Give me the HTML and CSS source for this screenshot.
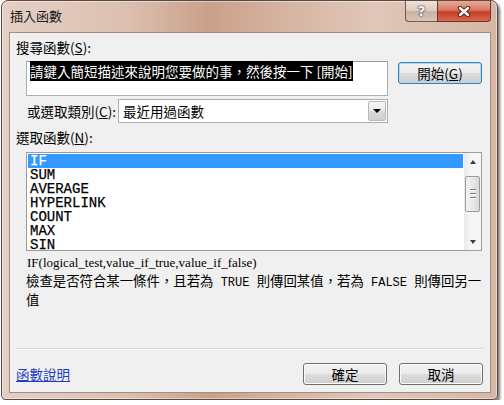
FILE: index.html
```html
<!DOCTYPE html>
<html lang="zh-Hant">
<head>
    <meta charset="UTF-8">
    <title>插入函數</title>
    <link rel="stylesheet" href="styles.css">
</head>
<body>
    <div class="window">
        <div class="titlebar">
            <span class="title">插入函數</span>
            <div class="caption-btns">
                <div class="cap-btn help">?</div>
                <div class="cap-btn close">
                    <svg width="14" height="11" viewBox="0 0 14 11">
                        <path d="M3 2 L11 9 M11 2 L3 9" stroke="#5b2418" stroke-width="4.4" stroke-linecap="round"/>
                        <path d="M3 2 L11 9 M11 2 L3 9" stroke="#fff" stroke-width="2.4" stroke-linecap="round"/>
                    </svg>
                </div>
            </div>
        </div>

        <div class="client">
            <div class="label">搜尋函數(<u>S</u>):</div>
            <div class="search-row">
                <div class="textbox"><span class="sel">請鍵入簡短描述來說明您要做的事，然後按一下 [開始]</span></div>
                <button class="btn btn-focus">開始(<u>G</u>)</button>
            </div>

            <div class="cat-row">
                <span class="cat-label">或選取類別(<u>C</u>):</span>
                <div class="combo">
                    <span class="combo-text">最近用過函數</span>
                    <span class="combo-btn"><span class="tri-down"></span></span>
                </div>
            </div>

            <div class="label label-list">選取函數(<u>N</u>):</div>
            <div class="listbox">
                <ul class="items">
                    <li class="selected">IF</li>
                    <li>SUM</li>
                    <li>AVERAGE</li>
                    <li>HYPERLINK</li>
                    <li>COUNT</li>
                    <li>MAX</li>
                    <li>SIN</li>
                </ul>
                <div class="scrollbar">
                    <div class="sb-arrow"><span class="tri-up"></span></div>
                    <div class="sb-thumb">
                        <span class="grip"></span>
                        <span class="grip"></span>
                        <span class="grip"></span>
                    </div>
                    <div class="sb-fill"></div>
                    <div class="sb-arrow"><span class="tri-down small"></span></div>
                </div>
            </div>

            <div class="syntax">IF(logical_test,value_if_true,value_if_false)</div>
            <div class="desc">檢查是否符合某一條件，且若為<span class="kw"> TRUE </span>則傳回某值，若為<span class="kw"> FALSE </span>則傳回另一值</div>

            <div class="separator"></div>
            <div class="footer">
                <a class="help-link" href="#">函數說明</a>
                <div class="footer-btns">
                    <button class="btn">確定</button>
                    <button class="btn">取消</button>
                </div>
            </div>
        </div>
    </div>
</body>
</html>
```

FILE: styles.css
```css
body {
    margin: 0;
    background-color: #ffffff;
    font-family: "Noto Sans CJK TC", sans-serif;
    font-size: 13.5px;
    color: #000;
}

.window {
    margin-left: 1px;
    width: 495px;
    height: 398px;
    border: 1px solid #5a4a41;
    border-radius: 7px 7px 5px 5px;
    background: linear-gradient(90deg, #e4cfc4 0%, #dcc0b0 25%, #c9a08a 42%, #d4b19e 55%, #e0c7b9 75%, #d6b6a4 100%);
    box-shadow: inset 0 0 0 1px rgba(255, 255, 255, 0.45), 2px 3px 3px rgba(0, 0, 0, 0.55);
    display: flex;
    flex-direction: column;
}

.titlebar {
    height: 31px;
    display: flex;
    justify-content: space-between;
    align-items: flex-start;
}

.title {
    padding: 7px 0 0 8px;
    font-size: 13px;
    line-height: 16px;
    color: #1a1a1a;
}

.caption-btns {
    display: flex;
    margin-right: 6px;
}

.cap-btn {
    height: 20px;
    display: flex;
    align-items: center;
    justify-content: center;
}

.help {
    width: 31px;
    border: 1px solid #6e5c52;
    border-top: none;
    border-right: none;
    border-radius: 0 0 0 4px;
    background: linear-gradient(#eee2da, #dccabf 48%, #c9b1a3 52%, #d9c4b8);
    font-family: "DejaVu Sans", sans-serif;
    font-weight: bold;
    font-size: 14px;
    color: #f4f4f4;
    text-shadow: 0 0 1px #444, 0 0 1px #444, 0 0 2px #555;
}

.close {
    width: 52px;
    border: 1px solid #6b3428;
    border-top: none;
    border-radius: 0 0 4px 0;
    background: linear-gradient(#eaa898, #d97a66 45%, #c63e24 55%, #d86a50);
}

.client {
    flex: 1;
    margin: 0 6px 6px 7px;
    background-color: #f0f0f0;
    border: 1px solid #a48c7e;
    padding: 6px 7px 7px 6px;
    display: flex;
    flex-direction: column;
}

.label {
    line-height: 16px;
}

.label-list {
    margin-top: 6px;
}

.search-row {
    display: flex;
    align-items: flex-start;
    margin: 6px 0 0 10px;
}

.textbox {
    box-sizing: border-box;
    width: 362px;
    height: 35px;
    padding: 1px 3px;
    background-color: #fff;
    border: 1px solid #abadb3;
    border-top-color: #9a9a9a;
    line-height: 16px;
    white-space: nowrap;
}

.sel {
    background-color: #000;
    color: #fff;
}

.btn {
    box-sizing: border-box;
    width: 84px;
    height: 22px;
    padding: 0;
    font: inherit;
    line-height: 18px;
    color: #000;
    border: 1px solid #707070;
    border-radius: 3px;
    background: linear-gradient(#f2f2f2, #ebebeb 50%, #dddddd 50%, #cfcfcf);
    box-shadow: inset 0 0 0 1px #fbfbfb;
}

.btn-focus {
    margin: 1px 0 0 10px;
    border-color: #3c7fb1;
    box-shadow: inset 0 0 0 1px #a7daf6;
}

.cat-row {
    display: flex;
    align-items: center;
    justify-content: space-between;
    width: 362px;
    margin: 3px 0 0 10px;
}

.cat-label {
    padding-left: 1px;
}

.combo {
    box-sizing: border-box;
    width: 270px;
    height: 24px;
    display: flex;
    align-items: center;
    justify-content: space-between;
    background-color: #fff;
    border: 1px solid #abadb3;
}

.combo-text {
    padding-left: 4px;
}

.combo-btn {
    box-sizing: border-box;
    width: 18px;
    height: 20px;
    margin-right: 1px;
    border: 1px solid #b8b8b8;
    border-radius: 2px;
    background: linear-gradient(#f6f6f6, #e8e8e8 50%, #d9d9d9 50%, #cfcfcf);
    display: flex;
    align-items: center;
    justify-content: center;
}

.tri-down {
    width: 0;
    height: 0;
    border-left: 4px solid transparent;
    border-right: 4px solid transparent;
    border-top: 4px solid #000;
}

.tri-down.small,
.tri-up {
    border-left-width: 3.5px;
    border-right-width: 3.5px;
}

.tri-down.small {
    border-top-color: #3c3c3c;
}

.tri-up {
    width: 0;
    height: 0;
    border-left: 3.5px solid transparent;
    border-right: 3.5px solid transparent;
    border-bottom: 4px solid #3c3c3c;
}

.listbox {
    box-sizing: border-box;
    width: 456px;
    height: 99px;
    margin: 7px 0 0 10px;
    display: flex;
    background-color: #fff;
    border: 1px solid #9c9c9c;
}

.items {
    flex: 1;
    margin: 0;
    padding: 1px 1px 0 1px;
    list-style: none;
    font-family: "Liberation Mono", monospace;
    font-size: 14px;
    -webkit-text-stroke: 0.25px #000;
}

.items li {
    height: 14px;
    line-height: 14px;
    padding-left: 2px;
}

.items li.selected {
    background-color: #3399ff;
    color: #fff;
    -webkit-text-stroke: 0.25px #fff;
}

.scrollbar {
    width: 17px;
    display: flex;
    flex-direction: column;
    background: linear-gradient(90deg, #e9e9e9, #f6f6f6 40%, #f6f6f6);
}

.sb-arrow {
    height: 17px;
    display: flex;
    align-items: center;
    justify-content: center;
}

.sb-thumb {
    box-sizing: border-box;
    height: 36px;
    margin: 6px 1px 0 1px;
    border: 1px solid #9b9b9b;
    border-radius: 2px;
    background: linear-gradient(90deg, #f3f3f3, #e9e9e9 50%, #d8d8d8);
    display: flex;
    flex-direction: column;
    align-items: center;
    justify-content: center;
    gap: 2px;
}

.grip {
    width: 6px;
    height: 1px;
    background-color: #7a7a7a;
    border-bottom: 1px solid #fff;
}

.sb-fill {
    flex: 1;
}

.syntax {
    margin: 4px 0 0 10px;
    padding-left: 1px;
    font-family: "Liberation Serif", serif;
    font-size: 13px;
    line-height: 16px;
}

.desc {
    width: 458px;
    margin: 1px 0 0 10px;
    font-size: 13.4px;
    line-height: 16px;
}

.kw {
    font-family: "Liberation Mono", monospace;
    font-size: 12px;
    white-space: pre;
}

.separator {
    margin-top: auto;
    height: 1px;
    background-color: #d5d5d5;
    border-bottom: 1px solid #fcfcfc;
    margin-bottom: 13px;
}

.footer {
    display: flex;
    align-items: center;
    justify-content: space-between;
}

.help-link {
    color: #1c3fc0;
    text-decoration: underline;
    line-height: 16px;
}

.footer-btns {
    display: flex;
    gap: 12px;
}
```
